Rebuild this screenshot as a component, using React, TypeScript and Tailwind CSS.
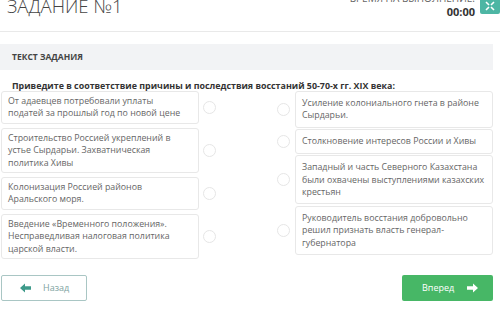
import React from "react";

const left = [
  "От адаевцев потребовали уплаты податей за прошлый год по новой цене",
  "Строительство Россией укреплений в устье Сырдарьи. Захватническая политика Хивы",
  "Колонизация Россией районов Аральского моря.",
  "Введение «Временного положения». Несправедливая налоговая политика царской власти.",
];
const right = [
  "Усиление колониального гнета в районе Сырдарьи.",
  "Столкновение интересов России и Хивы",
  "Западный и часть Северного Казахстана были охвачены выступлениями казахских крестьян",
  "Руководитель восстания добровольно решил признать власть генерал-губернатора",
];

function Circle() {
  return <div className="w-[13px] h-[13px] rounded-full border border-[#e6e6e6] bg-white shrink-0" />;
}

export default function App() {
  return (
    <div
      className="w-[500px] h-[314px] overflow-hidden bg-white relative"
      style={{ fontFamily: '"Open Sans", "Liberation Sans", sans-serif' }}
    >
      {/* header */}
      <div className="flex justify-between items-start h-[32px] border-b border-[#e9e9e9]">
        <div className="ml-[7px] -mt-[6px] text-[18.5px] leading-[24px] font-light text-[#444]">ЗАДАНИЕ №1</div>
        <div className="flex items-start -mt-[8px]">
          <div className="flex flex-col items-end">
            <div className="text-[10px] leading-[12px] text-[#666] uppercase">Время на выполнение:</div>
            <div className="text-[11px] leading-[13px] font-bold text-[#333] mt-[1px]">00:00</div>
          </div>
          <div className="ml-[5px] w-[20px] h-[22px] bg-[#4db6a4] rounded-[2px] flex items-end justify-center pb-[3px]">
            <svg width="10" height="10" viewBox="0 0 10 10" fill="none" stroke="white" strokeWidth="1.6">
              <path d="M1 1l3 3M9 1L6 4M1 9l3-3M9 9L6 6" />
            </svg>
          </div>
        </div>
      </div>

      {/* task text box */}
      <div className="mt-[12px] w-[493px] h-[26px] bg-[#f2f3f5] flex items-center pl-[12px]">
        <span className="text-[8.5px] font-bold text-[#444] uppercase">Текст задания</span>
      </div>

      <div className="pl-[12px] mt-[10px] text-[8.9px] leading-[12px] font-bold text-[#333]">
        Приведите в соответствие причины и последствия восстаний 50-70-х гг. XIX века:
      </div>

      {/* matching */}
      <div className="flex mt-[-1px] h-[164px]">
        <div className="ml-[1px] flex flex-col gap-[4px]">
          {left.map((t, i) => (
            <div key={i} className="flex items-center">
              <div className="w-[198px] border border-[#e8e8e8] rounded-[3px] pl-[6px] pr-[16px] py-[3px] text-[8.8px] leading-[12.4px] text-[#666]">
                {t}
              </div>
              <div className="ml-[4px]">
                <Circle />
              </div>
            </div>
          ))}
        </div>
        <div className="ml-[61px] flex flex-col justify-between">
          {right.map((t, i) => (
            <div key={i} className="flex items-center">
              <Circle />
              <div className="ml-[5px] w-[198px] border border-[#e8e8e8] rounded-[3px] px-[6px] py-[5px] text-[8.8px] leading-[12.4px] text-[#666]">
                {t}
              </div>
            </div>
          ))}
        </div>
      </div>

      {/* buttons */}
      <div className="flex justify-between mt-[20px] w-[493px]">
        <button className="ml-[1px] w-[86px] h-[26px] border border-[#a9c6c4] rounded-[2px] bg-white flex items-center pl-[18px]">
          <svg width="11" height="10" viewBox="0 0 11 10" fill="#3e9a8a">
            <path d="M0 5L5 0.5V3.3H11V6.7H5V9.5Z" />
          </svg>
          <span className="ml-[12px] text-[9px] text-[#7ea3a1]">Назад</span>
        </button>
        <button className="w-[91px] h-[26px] rounded-[2px] bg-[#47b766] flex items-center pl-[20px]">
          <span className="text-[9px] text-white">Вперед</span>
          <svg className="ml-[13px]" width="11" height="10" viewBox="0 0 11 10" fill="white">
            <path d="M11 5L6 0.5V3.3H0V6.7H6V9.5Z" />
          </svg>
        </button>
      </div>
    </div>
  );
}
